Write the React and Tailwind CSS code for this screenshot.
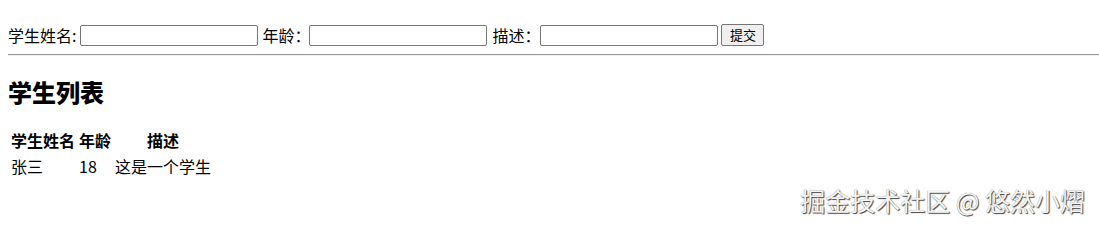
import React from 'react';

const students = [{ name: '张三', age: 18, desc: '这是一个学生' }];

const App = () => {
  return (
    <div
      className="relative w-full h-[225px] bg-white text-black overflow-hidden pl-2"
      style={{ fontFamily: '"Noto Sans CJK SC", "Noto Sans", sans-serif' }}
    >
      <form className="flex items-center h-[22px] mt-[24px] text-[16px] leading-[22px]" onSubmit={(e) => e.preventDefault()}>
        <label>学生姓名:</label>
        <input
          type="text"
          className="ml-[4px] w-[178px] h-[21px] border border-[#767676] rounded-[2px] px-[2px] text-[13px] outline-none"
        />
        <label className="ml-[4px]">年龄：</label>
        <input
          type="text"
          className="ml-[-1px] w-[178px] h-[21px] border border-[#767676] rounded-[2px] px-[2px] text-[13px] outline-none"
        />
        <label className="ml-[5px]">描述：</label>
        <input
          type="text"
          className="ml-0 w-[178px] h-[21px] border border-[#767676] rounded-[2px] px-[2px] text-[13px] outline-none"
        />
        <button
          type="submit"
          className="ml-[3px] w-[43px] h-[22px] border border-[#767676] rounded-[2px] bg-[#efefef] text-[13px] leading-[18px]"
        >
          提交
        </button>
      </form>

      <div className="mt-[8px] h-0 border-t border-[#9a9a9a] border-b border-b-[#eeeeee]" />

      <h2 className="mt-[24px] text-[24px] leading-[24px] font-extrabold">学生列表</h2>

      <table className="mt-[22px] border-separate border-spacing-[2px] text-[16px]">
        <thead>
          <tr>
            <th className="p-[1px] h-[24px] leading-[22px] font-bold text-center">学生姓名</th>
            <th className="p-[1px] h-[24px] leading-[22px] font-bold text-center">年龄</th>
            <th className="p-[1px] h-[24px] leading-[22px] font-bold text-center">描述</th>
          </tr>
        </thead>
        <tbody>
          {students.map((s) => (
            <tr key={s.name}>
              <td className="p-[1px] h-[24px] leading-[22px] text-left">{s.name}</td>
              <td className="p-[1px] h-[24px] leading-[22px] text-left">{s.age}</td>
              <td className="p-[1px] h-[24px] leading-[22px] text-left">{s.desc}</td>
            </tr>
          ))}
        </tbody>
      </table>

      <div className="absolute right-[14px] bottom-[12px] text-[25px] leading-[25px] text-[#f4f4f4] [text-shadow:1px_1px_1px_#444,0_0_1px_#888]">
        掘金技术社区 @ 悠然小熠
      </div>
    </div>
  );
};

export default App;
